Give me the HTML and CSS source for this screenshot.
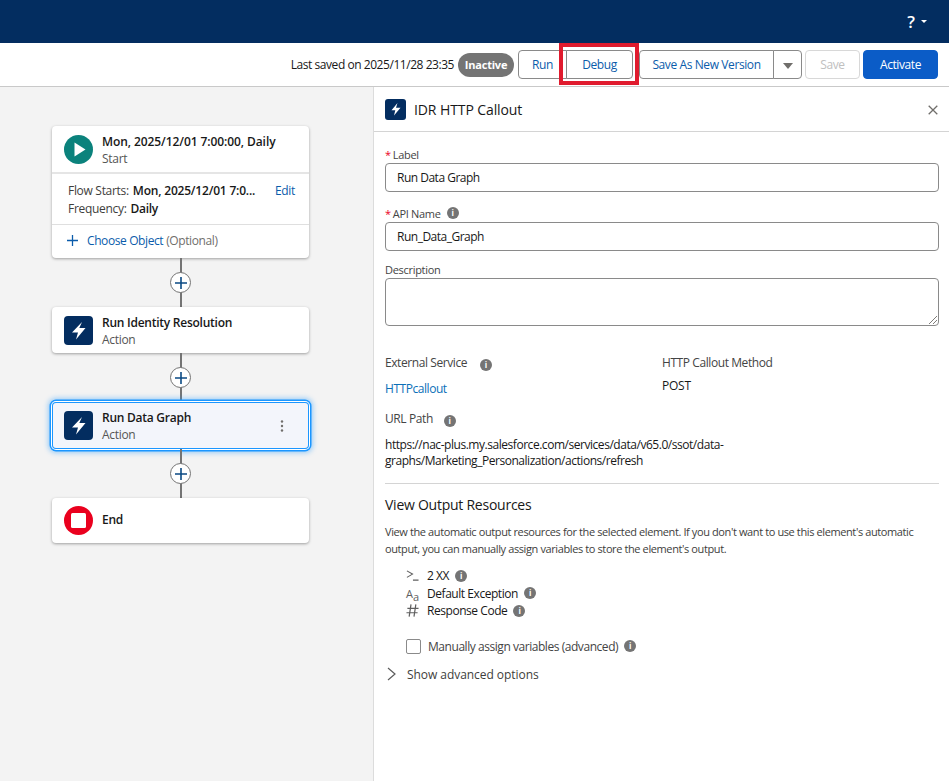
FILE: index.html
```html
<!DOCTYPE html>
<html lang="en">
<head>
  <meta charset="UTF-8">
  <meta name="viewport" content="width=device-width, initial-scale=1.0">
  <title>IDR HTTP Callout</title>
  <link rel="stylesheet" href="styles.css">
</head>
<body>
  <header class="top-bar">
    <span class="help-mark">?</span>
    <span class="help-caret"></span>
  </header>

  <div class="toolbar">
    <span class="saved-text">Last saved on 2025/11/28 23:35</span>
    <span class="status-pill">Inactive</span>
    <div class="btn-group">
      <button class="btn btn-run">Run</button>
      <button class="btn btn-debug">Debug</button>
      <span class="debug-highlight"></span>
    </div>
    <div class="btn-group btn-group-save">
      <button class="btn btn-new-version">Save As New Version</button>
      <button class="btn btn-menu"><span class="menu-caret"></span></button>
    </div>
    <button class="btn btn-disabled">Save</button>
    <button class="btn btn-primary">Activate</button>
  </div>

  <main class="workspace">
    <section class="canvas">
      <div class="node node-start">
        <div class="node-head">
          <svg class="node-icon" viewBox="0 0 29 29"><circle cx="14.5" cy="14.5" r="14.5" fill="#0b827c"/><path d="M10.5 7.5v14l11-7z" fill="#fff"/></svg>
          <div class="node-titles">
            <div class="node-title node-title-wide">Mon, 2025/12/01 7:00:00, Daily</div>
            <div class="node-sub">Start</div>
          </div>
        </div>
        <div class="node-details">
          <div class="detail-row">
            <span class="detail-label">Flow Starts:</span>
            <strong class="detail-value">Mon, 2025/12/01 7:0...</strong>
            <a class="detail-edit">Edit</a>
          </div>
          <div class="detail-row">
            <span class="detail-label">Frequency:</span>
            <strong>Daily</strong>
          </div>
        </div>
        <div class="node-object">
          <svg class="object-plus" viewBox="0 0 12 12"><path d="M6 0v12M0 6h12" stroke="#0b5cab" stroke-width="1.4"/></svg>
          <a class="object-link">Choose Object</a>
          <span class="object-note">(Optional)</span>
        </div>
      </div>

      <div class="connector"><span class="add-btn"><svg viewBox="0 0 12 12"><path d="M6 0v12M0 6h12" stroke="#0b4a84" stroke-width="1.6"/></svg></span></div>

      <div class="node">
        <div class="node-head">
          <svg class="node-icon" viewBox="0 0 29 29"><rect width="29" height="29" rx="4" fill="#032d60"/><path d="M18 6L8 16.5h6L12 23.5 21.5 12h-6.2z" fill="#fff"/></svg>
          <div class="node-titles">
            <div class="node-title">Run Identity Resolution</div>
            <div class="node-sub">Action</div>
          </div>
        </div>
      </div>

      <div class="connector"><span class="add-btn"><svg viewBox="0 0 12 12"><path d="M6 0v12M0 6h12" stroke="#0b4a84" stroke-width="1.6"/></svg></span></div>

      <div class="node node-selected">
        <div class="node-head">
          <svg class="node-icon" viewBox="0 0 29 29"><rect width="29" height="29" rx="4" fill="#032d60"/><path d="M18 6L8 16.5h6L12 23.5 21.5 12h-6.2z" fill="#fff"/></svg>
          <div class="node-titles">
            <div class="node-title">Run Data Graph</div>
            <div class="node-sub">Action</div>
          </div>
          <svg class="node-more" viewBox="0 0 4 12"><circle cx="2" cy="1.5" r="1.2"/><circle cx="2" cy="6" r="1.2"/><circle cx="2" cy="10.5" r="1.2"/></svg>
        </div>
      </div>

      <div class="connector"><span class="add-btn"><svg viewBox="0 0 12 12"><path d="M6 0v12M0 6h12" stroke="#0b4a84" stroke-width="1.6"/></svg></span></div>

      <div class="node">
        <div class="node-head node-head-end">
          <svg class="node-icon" viewBox="0 0 29 29"><circle cx="14.5" cy="14.5" r="14.5" fill="#ea001e"/><rect x="7" y="7" width="15" height="15" rx="1.5" fill="#fff"/></svg>
          <div class="node-titles">
            <div class="node-title">End</div>
          </div>
        </div>
      </div>
    </section>

    <aside class="panel">
      <div class="panel-head">
        <svg class="panel-icon" viewBox="0 0 21 21"><rect width="21" height="21" rx="3" fill="#032d60"/><path d="M12.5 4L6.5 11.3h3.8L9 16.5l6.5-7.7H11z" fill="#fff"/></svg>
        <h2 class="panel-title">IDR HTTP Callout</h2>
        <svg class="panel-close" viewBox="0 0 10 10"><path d="M.7.7l8.6 8.6M9.3.7L.7 9.3" stroke="#706e6b" stroke-width="1.3"/></svg>
      </div>

      <div class="panel-body">
        <div class="field">
          <label class="field-label"><span class="req">*</span>Label</label>
          <div class="input">Run Data Graph</div>
        </div>
        <div class="field">
          <label class="field-label"><span class="req">*</span>API Name <i class="info">i</i></label>
          <div class="input">Run_Data_Graph</div>
        </div>
        <div class="field field-desc">
          <label class="field-label">Description</label>
          <div class="textarea">
            <svg class="grip" viewBox="0 0 9 9"><path d="M9 1L1 9M9 5L5 9" stroke="#706e6b" stroke-width=".9"/></svg>
          </div>
        </div>

        <div class="info-grid">
          <div class="info-col">
            <div class="info-label">External Service <i class="info">i</i></div>
            <a class="info-link">HTTPcallout</a>
          </div>
          <div class="info-col">
            <div class="info-label">HTTP Callout Method</div>
            <div class="info-value">POST</div>
          </div>
        </div>

        <div class="url-label">URL Path <i class="info">i</i></div>
        <p class="url-text">https://nac-plus.my.salesforce.com/services/data/v65.0/ssot/data-<br>graphs/Marketing_Personalization/actions/refresh</p>

        <div class="divider"></div>

        <h3 class="section-title">View Output Resources</h3>
        <p class="section-text">View the automatic output resources for the selected element. If you don't want to use this element's automatic output, you can manually assign variables to store the element's output.</p>

        <ul class="resources">
          <li>
            <svg class="res-icon" viewBox="0 0 14 13"><path d="M1 1.5l6 3.5-6 3.5M7.5 11.5H13.5" fill="none" stroke="#5f5f5f" stroke-width="1.2"/></svg>
            2 XX <i class="info">i</i>
          </li>
          <li>
            <span class="res-icon res-aa">A<sub>a</sub></span>
            Default Exception <i class="info">i</i>
          </li>
          <li>
            <svg class="res-icon" viewBox="0 0 14 14"><path d="M5.4.5L3.4 13.5M10.6.5L8.6 13.5M1.5 4.6h12M.5 9.4h12" fill="none" stroke="#5f5f5f" stroke-width="1.3"/></svg>
            Response Code <i class="info">i</i>
          </li>
        </ul>

        <div class="check-row">
          <span class="checkbox"></span>
          <span class="check-label">Manually assign variables (advanced)</span>
          <i class="info">i</i>
        </div>

        <div class="advanced">
          <svg class="chevron" viewBox="0 0 9 14"><path d="M1 1l7 6-7 6" fill="none" stroke="#5c5c5c" stroke-width="1.2"/></svg>
          Show advanced options
        </div>
      </div>
    </aside>
  </main>
</body>
</html>
```

FILE: styles.css
```css
* {
  box-sizing: border-box;
}
html, body {
  height: 100%;
}
body {
  margin: 0;
  font-family: 'Open Sans', 'Noto Sans', sans-serif;
  font-size: 12px;
  color: #181818;
  background-color: #fff;
  display: flex;
  flex-direction: column;
  overflow: hidden;
}
a {
  color: #0b5cab;
}
.top-bar {
  height: 43px;
  background-color: #032d60;
  display: flex;
  align-items: center;
  justify-content: flex-end;
  padding: 0 22px 0 0;
  flex-shrink: 0;
}
.help-mark {
  color: #fff;
  font-size: 17px;
  font-weight: 600;
}
.help-caret {
  margin-left: 6px;
  border-left: 3px solid transparent;
  border-right: 3px solid transparent;
  border-top: 3px solid #fff;
}
.toolbar {
  height: 44px;
  flex-shrink: 0;
  display: flex;
  align-items: center;
  justify-content: flex-end;
  padding: 0 11px 0 0;
  border-bottom: 1px solid #c9c9c9;
}
.saved-text {
  font-size: 12px;
  letter-spacing: -0.45px;
  margin-right: 4px;
}
.status-pill {
  height: 24px;
  width: 56px;
  margin-right: 4px;
  border-radius: 12px;
  background-color: #747474;
  color: #fff;
  font-size: 11px;
  font-weight: 700;
  letter-spacing: -0.2px;
  display: flex;
  align-items: center;
  justify-content: center;
}
.btn {
  height: 29px;
  padding: 0;
  background-color: #fff;
  border: 1px solid #8a8a8a;
  border-radius: 4px;
  color: #0b5cab;
  font-family: inherit;
  font-size: 12px;
  letter-spacing: -0.4px;
}
.btn-group {
  display: flex;
  position: relative;
}
.btn-group .btn:first-child {
  border-radius: 4px 0 0 4px;
}
.btn-group .btn:last-of-type {
  border-radius: 0 4px 4px 0;
  margin-left: -1px;
}
.btn-run {
  width: 49px;
}
.btn-debug {
  width: 67px;
}
.btn-group-save {
  margin-left: 6px;
}
.btn-new-version {
  width: 135px;
}
.btn-menu {
  width: 29px;
}
.menu-caret {
  display: inline-block;
  border-left: 5px solid transparent;
  border-right: 5px solid transparent;
  border-top: 6px solid #706e6b;
  margin-top: 3px;
}
.debug-highlight {
  position: absolute;
  left: 41px;
  top: -7px;
  width: 80px;
  height: 42px;
  border: 4px solid #e01b2e;
}
.btn-disabled {
  width: 55px;
  margin-left: 3px;
  color: #c0c0c0;
  border-color: #d8d8d8;
}
.btn-primary {
  width: 75px;
  margin-left: 3px;
  background-color: #0b5cc7;
  border-color: #0b5cc7;
  color: #fff;
}
.workspace {
  flex: 1;
  display: flex;
  min-height: 0;
}
.canvas {
  width: 373px;
  background-color: #f3f3f3;
  padding: 39px 0 0 52px;
}
.node {
  width: 257px;
  background-color: #fff;
  border-radius: 4px;
  box-shadow: 0 1px 3px rgba(0, 0, 0, 0.35);
}
.node-head {
  display: flex;
  align-items: center;
  height: 46px;
  padding: 0 11px 0 12px;
}
.node-selected .node-head {
  height: 47px;
}
.node-head-end {
  height: 45px;
}
.node-icon {
  width: 29px;
  height: 29px;
  flex-shrink: 0;
}
.node-titles {
  margin-left: 9px;
  flex: 1;
  padding-top: 2px;
}
.node-head-end .node-titles {
  padding: 0 0 2px;
}
.node-title {
  font-weight: 600;
  font-size: 12px;
  line-height: 16px;
  letter-spacing: -0.25px;
  color: #181818;
}
.node-title-wide {
  letter-spacing: -0.08px;
}
.node-sub {
  font-size: 12px;
  line-height: 17px;
  letter-spacing: -0.3px;
  color: #555;
}
.node-more {
  width: 4px;
  height: 12px;
  fill: #706e6b;
  margin-right: 14px;
}
.node-details {
  border-top: 2px solid #e5e5e5;
  height: 52px;
  padding: 7px 14px 0 16px;
}
.detail-row {
  display: flex;
  align-items: center;
  height: 18.5px;
  gap: 4px;
  letter-spacing: -0.3px;
  color: #3e3e3c;
}
.detail-row strong {
  font-weight: 600;
  color: #181818;
}
.detail-value {
  flex: 1;
  letter-spacing: -0.2px;
}
.detail-edit {
  color: #0b5cab;
}
.node-object {
  border-top: 1px solid #dfdfdf;
  height: 34px;
  display: flex;
  align-items: center;
  padding: 0 0 2px 15px;
  letter-spacing: -0.4px;
}
.object-plus {
  width: 11px;
  height: 11px;
  margin-right: 9px;
}
.object-link {
  margin-right: 3px;
}
.object-note {
  color: #706e6b;
}
.node-selected {
  background-color: #f3f5fb;
  box-shadow: inset 0 0 0 1px #1b96ff, 0 0 0 1px #fff, 0 0 0 2.5px #1b96ff, 0 0 5px 4px rgba(27, 150, 255, 0.4);
}
.connector {
  width: 257px;
  height: 49px;
  display: flex;
  align-items: center;
  justify-content: center;
  background: linear-gradient(#747474, #747474) center / 2px 100% no-repeat;
}
.add-btn {
  width: 21px;
  height: 21px;
  border-radius: 50%;
  background-color: #fff;
  border: 1px solid #747474;
  display: flex;
  align-items: center;
  justify-content: center;
}
.add-btn svg {
  width: 12px;
  height: 12px;
}
.panel {
  flex: 1;
  background-color: #fff;
  border-left: 1px solid #dcdcdc;
  min-width: 0;
}
.panel-head {
  height: 45px;
  display: flex;
  align-items: center;
  padding: 1px 11px 0 11px;
  border-bottom: 1px solid #d4d4d4;
}
.panel-icon {
  width: 21px;
  height: 21px;
  margin-right: 8px;
}
.panel-title {
  flex: 1;
  margin: 0;
  font-size: 14px;
  font-weight: 400;
  letter-spacing: -0.1px;
}
.panel-close {
  width: 10px;
  height: 10px;
}
.panel-body {
  padding: 0 10px 0 11px;
}
.field-label {
  display: flex;
  align-items: center;
  height: 18px;
  margin-top: 13px;
  font-size: 11px;
  letter-spacing: -0.3px;
  color: #444;
}
.field + .field .field-label {
  margin-top: 12px;
}
.field-desc.field .field-label {
  margin-top: 9px;
}
.req {
  color: #ea001e;
  margin-right: 2px;
}
.input {
  height: 29px;
  border: 1px solid #8a8a8a;
  border-radius: 4px;
  padding: 0 11px;
  display: flex;
  align-items: center;
  letter-spacing: -0.5px;
  line-height: 27px;
}
.textarea {
  position: relative;
  height: 48px;
  border: 1px solid #8a8a8a;
  border-radius: 4px;
}
.grip {
  position: absolute;
  right: 1px;
  bottom: 1px;
  width: 9px;
  height: 9px;
}
.info {
  display: inline-flex;
  align-items: center;
  justify-content: center;
  width: 12px;
  height: 12px;
  margin-left: 6px;
  border-radius: 50%;
  background-color: #747474;
  color: #fff;
  font-size: 8px;
  font-style: normal;
  font-weight: 700;
  line-height: 1;
  vertical-align: -1px;
}
.info-grid {
  display: grid;
  grid-template-columns: 277px 1fr;
  margin-top: 28px;
}
.info-label {
  font-size: 12px;
  letter-spacing: -0.42px;
  color: #444;
  line-height: 18px;
}
.info-label .info {
  margin-left: 10px;
}
.info-link {
  display: block;
  margin-top: 8px;
  color: #0b6fb8;
  letter-spacing: -0.45px;
  line-height: 18px;
}
.info-value {
  margin-top: 5px;
  letter-spacing: -0.25px;
  line-height: 18px;
}
.url-label {
  margin-top: 12px;
  color: #444;
  line-height: 18px;
  letter-spacing: -0.4px;
}
.url-label .info {
  margin-left: 8px;
}
.url-text {
  margin: 9px 0 0;
  line-height: 16px;
  letter-spacing: -0.46px;
}
.divider {
  margin-top: 14px;
  border-top: 1px solid #d4d4d4;
}
.section-title {
  margin: 11px 0 0;
  font-size: 14px;
  font-weight: 400;
  line-height: 20px;
  letter-spacing: -0.25px;
}
.section-text {
  margin: 8px 0 0;
  font-size: 11px;
  line-height: 17px;
  letter-spacing: -0.39px;
  color: #3e3e3c;
}
.resources {
  list-style: none;
  margin: 10px 0 0;
  padding: 0 0 0 21px;
}
.resources li {
  display: flex;
  align-items: center;
  height: 17.5px;
  letter-spacing: -0.45px;
}
.res-icon {
  width: 13px;
  height: 13px;
  margin-right: 8px;
  flex-shrink: 0;
}
.res-aa {
  color: #5f5f5f;
  font-size: 11px;
  line-height: 13px;
  letter-spacing: 0;
}
.res-aa sub {
  font-size: 11px;
  line-height: 0;
}
.check-row {
  display: flex;
  align-items: center;
  margin: 17.5px 0 0 21px;
  height: 18px;
  letter-spacing: -0.45px;
  color: #444;
}
.checkbox {
  width: 15px;
  height: 15px;
  border: 1px solid #8a8a8a;
  border-radius: 2px;
  margin-right: 7px;
}
.advanced {
  display: flex;
  align-items: center;
  margin-top: 10px;
  height: 18px;
  letter-spacing: -0.05px;
  color: #3e3e3c;
}
.chevron {
  width: 9px;
  height: 14px;
  margin: 0 11px 0 2px;
}
```
